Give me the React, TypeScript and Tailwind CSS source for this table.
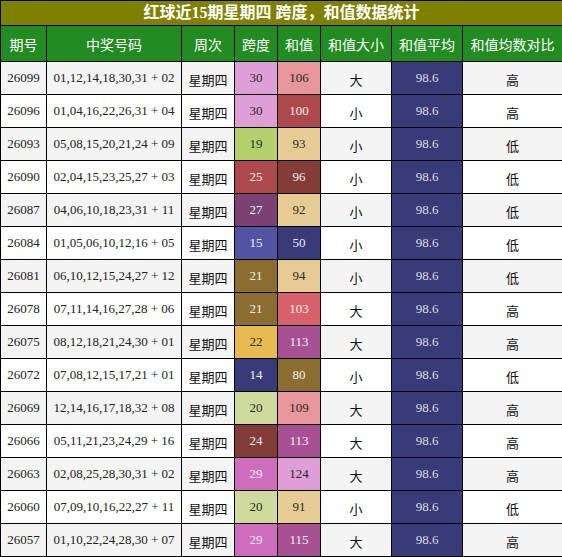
import React from "react";

type Row = {
  id: string;
  nums: string;
  span: number;
  spanBg: string;
  spanLight: boolean;
  sum: number;
  sumBg: string;
  sumLight: boolean;
  size: string;
  cmp: string;
};

const rows: Row[] = [
  { id: "26099", nums: "01,12,14,18,30,31 + 02", span: 30, spanBg: "#de9ed6", spanLight: false, sum: 106, sumBg: "#e7969c", sumLight: false, size: "大", cmp: "高" },
  { id: "26096", nums: "01,04,16,22,26,31 + 04", span: 30, spanBg: "#de9ed6", spanLight: false, sum: 100, sumBg: "#ad494a", sumLight: true, size: "小", cmp: "高" },
  { id: "26093", nums: "05,08,15,20,21,24 + 09", span: 19, spanBg: "#b5cf6b", spanLight: false, sum: 93, sumBg: "#e7cb94", sumLight: false, size: "小", cmp: "低" },
  { id: "26090", nums: "02,04,15,23,25,27 + 03", span: 25, spanBg: "#ad494a", spanLight: true, sum: 96, sumBg: "#843c39", sumLight: true, size: "小", cmp: "低" },
  { id: "26087", nums: "04,06,10,18,23,31 + 11", span: 27, spanBg: "#7b4173", spanLight: true, sum: 92, sumBg: "#e7cb94", sumLight: false, size: "小", cmp: "低" },
  { id: "26084", nums: "01,05,06,10,12,16 + 05", span: 15, spanBg: "#5254a3", spanLight: true, sum: 50, sumBg: "#393b79", sumLight: true, size: "小", cmp: "低" },
  { id: "26081", nums: "06,10,12,15,24,27 + 12", span: 21, spanBg: "#8c6d31", spanLight: true, sum: 94, sumBg: "#e7cb94", sumLight: false, size: "小", cmp: "低" },
  { id: "26078", nums: "07,11,14,16,27,28 + 06", span: 21, spanBg: "#8c6d31", spanLight: true, sum: 103, sumBg: "#d6616b", sumLight: true, size: "大", cmp: "高" },
  { id: "26075", nums: "08,12,18,21,24,30 + 01", span: 22, spanBg: "#e7ba52", spanLight: false, sum: 113, sumBg: "#a55194", sumLight: true, size: "大", cmp: "高" },
  { id: "26072", nums: "07,08,12,15,17,21 + 01", span: 14, spanBg: "#393b79", spanLight: true, sum: 80, sumBg: "#8c6d31", sumLight: true, size: "小", cmp: "低" },
  { id: "26069", nums: "12,14,16,17,18,32 + 08", span: 20, spanBg: "#cedb9c", spanLight: false, sum: 109, sumBg: "#e7969c", sumLight: false, size: "大", cmp: "高" },
  { id: "26066", nums: "05,11,21,23,24,29 + 16", span: 24, spanBg: "#843c39", spanLight: true, sum: 113, sumBg: "#a55194", sumLight: true, size: "大", cmp: "高" },
  { id: "26063", nums: "02,08,25,28,30,31 + 02", span: 29, spanBg: "#ce6dbd", spanLight: true, sum: 124, sumBg: "#de9ed6", sumLight: false, size: "大", cmp: "高" },
  { id: "26060", nums: "07,09,10,16,22,27 + 11", span: 20, spanBg: "#cedb9c", spanLight: false, sum: 91, sumBg: "#e7cb94", sumLight: false, size: "小", cmp: "低" },
  { id: "26057", nums: "01,10,22,24,28,30 + 07", span: 29, spanBg: "#ce6dbd", spanLight: true, sum: 115, sumBg: "#a55194", sumLight: true, size: "大", cmp: "高" },
];

const headers = ["期号", "中奖号码", "周次", "跨度", "和值", "和值大小", "和值平均", "和值均数对比"];

const numFont = "font-['Liberation_Serif',serif] text-[13px]";
const cjkFont = "font-['Noto_Sans_CJK_SC',sans-serif] text-[13px]";

export default function App() {
  return (
    <div className="w-[562px] h-[557px] bg-white">
      <table className="w-[562px] table-fixed border-collapse border border-black">
        <colgroup>
          <col className="w-[46px]" />
          <col className="w-[135px]" />
          <col className="w-[53px]" />
          <col className="w-[43px]" />
          <col className="w-[43px]" />
          <col className="w-[71px]" />
          <col className="w-[71px]" />
          <col className="w-[100px]" />
        </colgroup>
        <thead>
          <tr className="h-[25px]">
            <th
              colSpan={8}
              className="border border-black bg-[#808000] p-0 text-center text-[16px] font-bold leading-none text-white font-['Liberation_Serif','Noto_Sans_CJK_SC',serif]"
            >
              红球近15期星期四 跨度，和值数据统计
            </th>
          </tr>
          <tr className="h-[36px]">
            {headers.map((h) => (
              <th
                key={h}
                className="border border-black bg-[#228b22] p-0 text-center text-[14px] font-normal leading-none text-white font-['Noto_Sans_CJK_SC',sans-serif]"
              >
                {h}
              </th>
            ))}
          </tr>
        </thead>
        <tbody>
          {rows.map((r, i) => {
            const rowBg = i % 2 === 0 ? "bg-[#f4f4f4]" : "bg-white";
            return (
              <tr key={r.id} className="h-[33px]">
                <td className={`border border-black p-0 text-center text-[#222] ${rowBg} ${numFont}`}>{r.id}</td>
                <td className={`border border-black p-0 text-center text-[#222] whitespace-nowrap ${rowBg} ${numFont}`}>{r.nums}</td>
                <td className={`border border-black p-0 pt-[3px] text-center text-[#111] ${rowBg} ${cjkFont}`}>星期四</td>
                <td
                  className={`border border-black p-0 text-center ${numFont} ${r.spanLight ? "text-[#eeeeee]" : "text-[#2a2a2a]"}`}
                  style={{ backgroundColor: r.spanBg }}
                >
                  {r.span}
                </td>
                <td
                  className={`border border-black p-0 text-center ${numFont} ${r.sumLight ? "text-[#eeeeee]" : "text-[#2a2a2a]"}`}
                  style={{ backgroundColor: r.sumBg }}
                >
                  {r.sum}
                </td>
                <td className={`border border-black p-0 pt-[3px] text-center text-[#111] ${rowBg} ${cjkFont}`}>{r.size}</td>
                <td className={`border border-black p-0 text-center bg-[#393b79] text-[#dddddd] ${numFont}`}>98.6</td>
                <td className={`border border-black p-0 pt-[3px] text-center text-[#111] ${rowBg} ${cjkFont}`}>{r.cmp}</td>
              </tr>
            );
          })}
        </tbody>
      </table>
    </div>
  );
}
